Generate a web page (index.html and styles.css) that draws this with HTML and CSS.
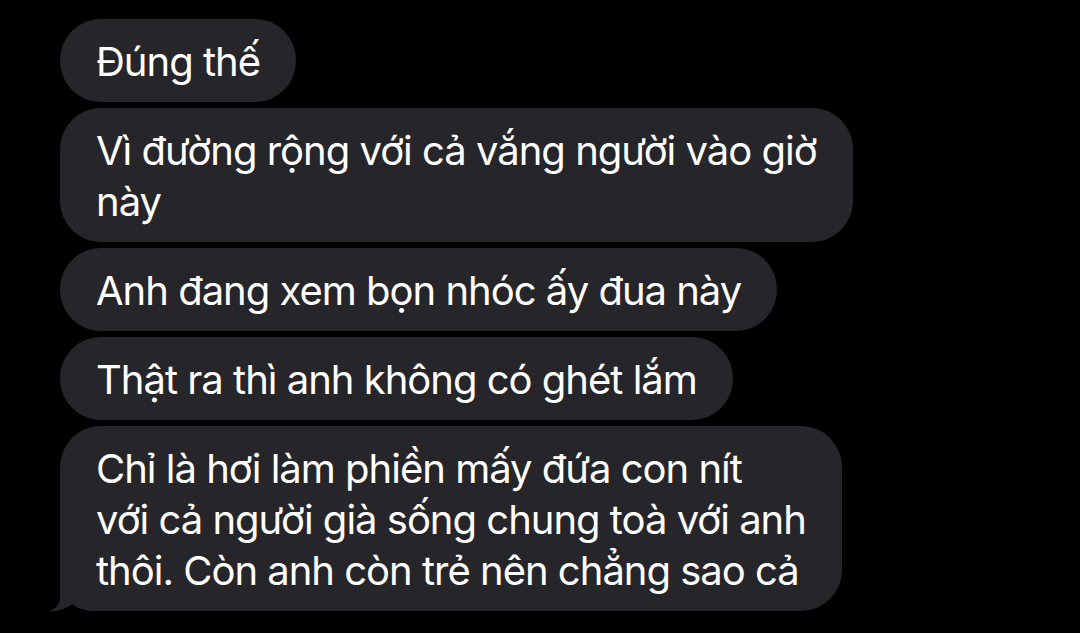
FILE: index.html
```html
<!DOCTYPE html>
<html lang="vi">
<head>
    <meta charset="UTF-8">
    <meta name="viewport" content="width=device-width, initial-scale=1.0">
    <title>Tin nhắn</title>
    <link rel="stylesheet" href="styles.css">
</head>
<body>

<div class="thread">
    <div class="bubble">Đúng thế</div>
    <div class="bubble">Vì đường rộng với cả vắng người vào giờ<br>này</div>
    <div class="bubble">Anh đang xem bọn nhóc ấy đua này</div>
    <div class="bubble">Thật ra thì anh không có ghét lắm</div>
    <div class="bubble last">
        Chỉ là hơi làm phiền mấy đứa con nít<br>với cả người già sống chung toà với anh<br>thôi. Còn anh còn trẻ nên chẳng sao cả
        <!-- đuôi bong bóng, góc dưới bên trái -->
        <svg class="tail" width="45" height="41" viewBox="0 0 45 41">
            <rect width="45" height="41" fill="#000"/>
            <path d="M10 0 L10 27 C10 33 6 37 0 40 C9 40.5 17 37 22 33 C28 37.5 35 40 45 40 L45 0 Z" fill="#262529"/>
        </svg>
    </div>
</div>

</body>
</html>
```

FILE: styles.css
```css
body {
    margin: 0;
    background-color: #000;
    font-family: Inter, "Noto Sans", sans-serif;
    height: 633px;
    overflow: hidden;
}

.thread {
    display: flex;
    flex-direction: column;
    align-items: flex-start;
    gap: 6px;
    padding: 19px 0 0 60px;
}

.bubble {
    position: relative;
    background-color: #262529;
    color: #fff;
    font-size: 40px;
    letter-spacing: -1px;
    line-height: 51px;
    padding: 17px 36px 15px;
    border-radius: 41px;
}

.last {
    border-bottom-left-radius: 0;
}

.tail {
    position: absolute;
    left: -10px;
    bottom: -1px;
}
```
